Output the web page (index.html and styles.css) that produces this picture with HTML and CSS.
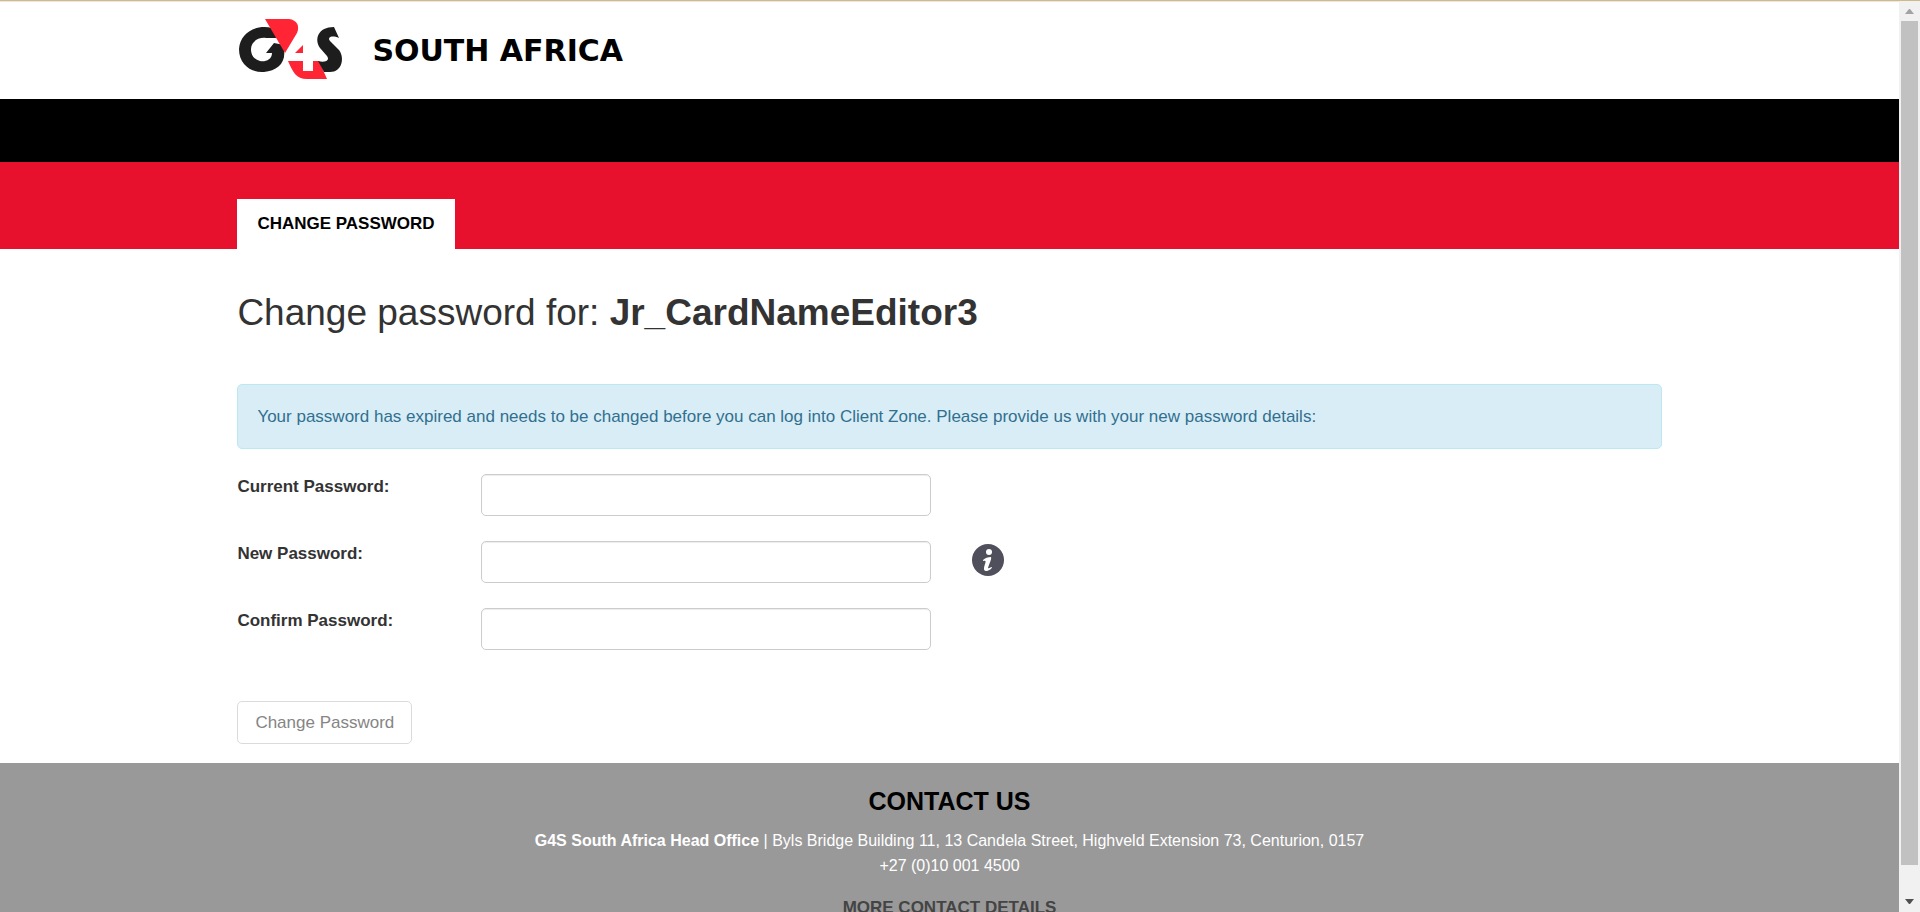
FILE: index.html
```html
<!DOCTYPE html>
<html lang="en">
<head>
<meta charset="utf-8">
<title>G4S South Africa - Change Password</title>
<link rel="stylesheet" href="styles.css">
</head>
<body>
<div class="page">
  <header class="brand-bar">
    <div class="container brand">
      <svg class="logo" viewBox="0 0 106 62" role="img" aria-label="G4S">
        <path fill="#1d1d1d" d="M33 9C17 5 1 14 0 30C0 46 13 54 25 53C38 52 47 44 45 31L45 26L35 24L27 34L33 34C33 41 26 43 21 42C14 40 12 35 12 30C12 23 19 18 27 19L38 19Z"/>
        <path fill="#ff2534" d="M26 0H50C58 1 61 7 58 14L46 34Z"/>
        <path fill="#ff2534" fill-rule="evenodd" d="M49 42H64V52H74V42H80L88 60H68C57 60 54 53 49 42ZM64 26V34H56Z"/>
        <path fill="#1d1d1d" d="M95 8L100 19C93 16 88 18 91 22L100 31C106 39 103 53 91 53H85L79 42C87 44 91 41 88 37L81 29C75 20 79 8 95 8Z"/>
      </svg>
      <span class="region">SOUTH AFRICA</span>
    </div>
  </header>
  <div class="black-bar"></div>
  <nav class="red-bar">
    <div class="container"><a class="tab" href="#password">CHANGE PASSWORD</a></div>
  </nav>
  <main class="container content" id="password">
    <h1 class="title">Change password for: <strong>Jr_CardNameEditor3</strong></h1>
    <p class="notice">Your password has expired and needs to be changed before you can log into Client Zone. Please provide us with your new password details:</p>
    <form class="form">
      <div class="row">
        <label for="current">Current Password:</label>
        <input id="current" type="password">
      </div>
      <div class="row">
        <label for="new">New Password:</label>
        <input id="new" type="password">
        <svg class="info" viewBox="0 0 32 32" role="img" aria-label="Password information">
          <circle cx="16" cy="16" r="16" fill="#50505c"/>
          <circle cx="17" cy="8" r="3" fill="#fff"/>
          <path fill="#fff" d="M11 16C13 14 16 13 19 13C20 15 17 20 16 24C17 25 18 23 20 23C20 25 16 27 14 27C11 27 12 23 13 20C14 17 14 16 11 17Z"/>
        </svg>
      </div>
      <div class="row">
        <label for="confirm">Confirm Password:</label>
        <input id="confirm" type="password">
      </div>
      <button class="submit" type="submit" disabled>Change Password</button>
    </form>
  </main>
  <footer class="footer">
    <h2>CONTACT US</h2>
    <p><strong>G4S South Africa Head Office</strong> | Byls Bridge Building 11, 13 Candela Street, Highveld Extension 73, Centurion, 0157<br>+27 (0)10 001 4500</p>
    <a class="more" href="#contact">MORE CONTACT DETAILS</a>
  </footer>
</div>
<div class="scrollbar" aria-hidden="true">
  <svg class="arrow" viewBox="0 0 9 5"><path fill="#a3a3a3" d="M0 5L4 0H5L9 5Z"/></svg>
  <div class="thumb"></div>
  <svg class="arrow" viewBox="0 0 9 5"><path fill="#505050" d="M0 0L4 5H5L9 0Z"/></svg>
</div>
</body>
</html>
```
FILE: styles.css
```css
* { box-sizing: border-box; }
body {
  margin: 0;
  height: 100vh;
  display: flex;
  overflow: hidden;
  border-top: 1px solid #cdb98a;
  font-family: "Liberation Sans", Arial, sans-serif;
  font-size: 17px;
  line-height: 25px;
  color: #333;
  background: #fff;
}
.page { flex: 1; min-width: 0; overflow: hidden; }
.container { width: 75%; margin: 0 auto; }
.brand-bar { padding: 17px 0 18px; border-top: 1px solid #ece8e0; }
.brand { display: flex; align-items: center; gap: 27px; padding-left: 2px; }
.logo { width: 106px; height: 62px; }
.region {
  font-family: "DejaVu Sans", sans-serif;
  font-size: 30px;
  font-weight: bold;
  color: #000;
}
.black-bar { height: 63px; background: #000; }
.red-bar { padding-top: 37px; background: #e8112d; }
.tab {
  display: inline-block;
  padding: 12px 20px 13px;
  background: #fff;
  color: #000;
  font-weight: bold;
  text-decoration: none;
  vertical-align: top;
}
.content { padding-bottom: 19px; }
.title {
  margin: 0;
  padding: 43px 0 50px;
  font-size: 37px;
  line-height: 42px;
  font-weight: normal;
}
.notice {
  margin: 0 0 25px;
  padding: 19px;
  border: 1px solid #bce8f1;
  border-radius: 5px;
  background: #d9edf7;
  color: #31708f;
}
.row { display: flex; align-items: flex-start; margin-bottom: 25px; }
.row label { width: 244px; font-weight: bold; }
.row input {
  width: 450px;
  height: 42px;
  padding: 8px 15px;
  border: 1px solid #ccc;
  border-radius: 5px;
  box-shadow: inset 0 1px 1px rgba(0, 0, 0, 0.075);
  background: #fff;
  font: inherit;
}
.info { width: 32px; height: 32px; margin: 3px 0 0 41px; }
.submit {
  display: block;
  margin-top: 51px;
  height: 43px;
  padding: 0 17px;
  border: 1px solid #dbdbdb;
  border-radius: 5px;
  background: #fff;
  color: #858585;
  font: inherit;
}
.footer {
  padding: 24px 20px;
  background: #999;
  color: #fff;
  text-align: center;
  font-size: 16px;
}
.footer h2 { margin: 0 0 13px; color: #000; font-size: 25px; line-height: 28px; }
.footer p { margin: 0 0 17px; }
.more { color: #444; font-size: 17px; font-weight: bold; text-decoration: none; }
.scrollbar {
  width: 21px;
  padding: 8px 2px;
  display: flex;
  flex-direction: column;
  align-items: center;
  background: #f1f1f1;
}
.arrow { width: 9px; height: 5px; }
.thumb { width: 17px; height: 844px; margin: 7px 0 auto; background: #c1c1c1; }
```
